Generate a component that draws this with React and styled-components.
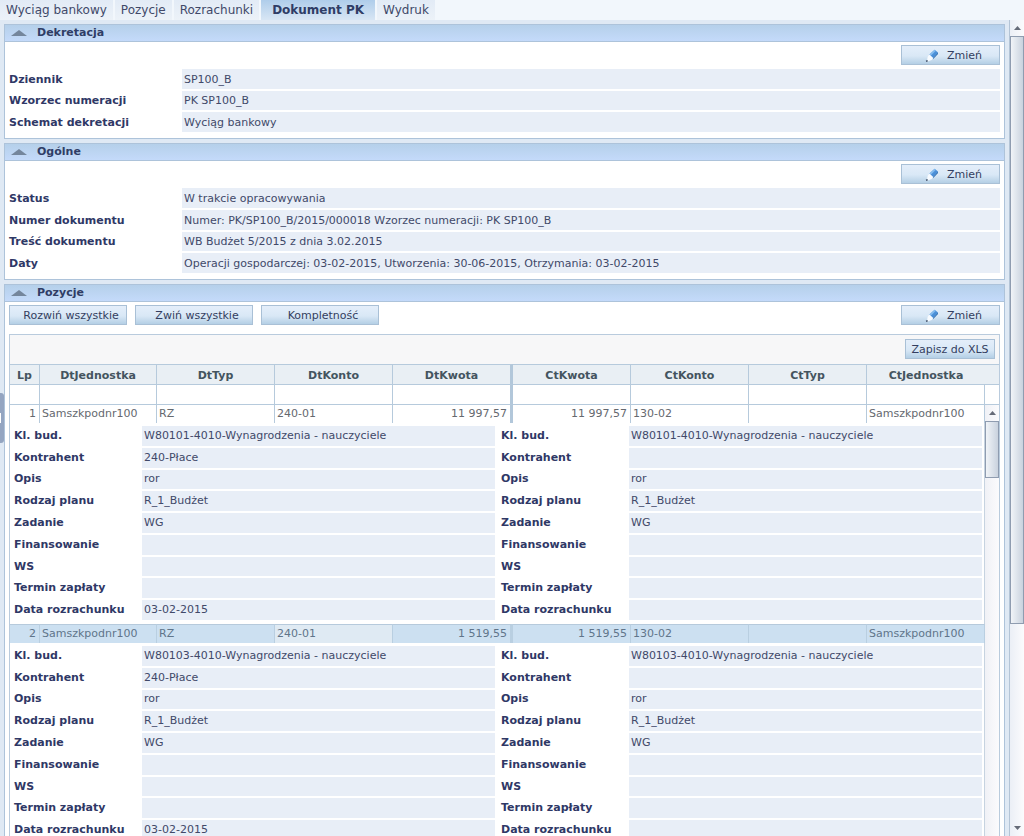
import React from "react";
import styled, { createGlobalStyle, css } from "styled-components";

const GlobalStyle = createGlobalStyle`
  *, *::before, *::after { box-sizing: border-box; }
  body {
    margin: 0;
    overflow: hidden;
    font: 11px/14px "DejaVu Sans", Verdana, sans-serif;
    color: #414969;
    background: #dfe9f4;
  }
  button, input { font: inherit; color: inherit; }
`;

const Shell = styled.div`
  height: 100vh;
  display: flex;
  flex-direction: column;
  overflow: hidden;
`;

const Tabs = styled.nav`
  flex: none;
  display: flex;
  gap: 2px;
  height: 20px;
  background: #f2f7fc;
  font-size: 12px;
  line-height: 20px;
`;

const Tab = styled.a`
  padding: 0 6px;
  color: #414969;
  text-decoration: none;
  white-space: nowrap;
  background: linear-gradient(#e2ebf6, #ecf2f8);
  ${(p) =>
    p.$active &&
    css`
      padding: 0 11px;
      font-weight: bold;
      color: #2f3d66;
      background: linear-gradient(#afcdea, #d8e6f4);
    `}
`;

const Workspace = styled.div`
  flex: 1;
  min-height: 0;
  display: flex;
  position: relative;
`;

const Handle = styled.button`
  position: absolute;
  left: 0;
  top: 373px;
  display: flex;
  align-items: center;
  width: 4px;
  height: 50px;
  padding: 0;
  border: 0;
  border-radius: 0 3px 3px 0;
  background: #94a5c1;

  &::before {
    content: "";
    width: 1px;
    height: 10px;
    background: #fff;
  }
`;

const Main = styled.main`
  flex: 1;
  min-width: 0;
  overflow: hidden;
  display: flex;
  flex-direction: column;
  gap: 4px;
  padding: 4px 4px 0;
`;

const PanelBox = styled.section`
  flex: none;
  border: 1px solid #adc3da;
  background: #fff;
`;

const PanelHeader = styled.h2`
  display: flex;
  align-items: center;
  gap: 9px;
  height: 17px;
  margin: 0;
  padding: 0 5px;
  font-size: 11px;
  line-height: 16px;
  color: #2f3d66;
  background: linear-gradient(#b5d0ea, #c4dafa);
  border-bottom: 1px solid #adc3da;
`;

const Toggle = styled.button`
  display: flex;
  padding: 0;
  border: 0;
  background: none;
`;

const PanelBody = styled.div`
  padding: 3px 4px 5px;
`;

const Toolbar = styled.div`
  display: flex;
  gap: 8px;
  margin-bottom: ${(p) => p.$space || 3}px;
`;

const buttonFace = css`
  height: 20px;
  border: 1px solid #a9c0d6;
  line-height: 16px;
  color: #333e60;
  background: linear-gradient(#e4eefa, #d9e8f6 55%, #b4cfe5);
`;

const ActionButton = styled.button`
  ${buttonFace}
  width: 118px;
  padding: 2px 0 0 6px;
`;

const EditButton = styled.button`
  ${buttonFace}
  display: flex;
  align-items: center;
  justify-content: center;
  gap: 8px;
  width: 99px;
  margin-left: auto;
  padding: 2px 0 0 6px;
`;

const ExportButton = styled.button`
  ${buttonFace}
  width: 90px;
  padding: 1px 0 0;
  white-space: nowrap;
`;

const Fields = styled.dl`
  flex: 1;
  display: grid;
  grid-auto-rows: 1fr;
  min-height: ${(p) => p.$height}px;
  margin: 0;
`;

const Field = styled.div`
  display: grid;
  grid-template-columns: ${(p) => (p.$compact ? 128 : 173)}px 1fr;
  align-items: stretch;
  padding: 1px 0;

  dt, dd {
    display: flex;
    align-items: center;
    padding-top: ${(p) => (p.$compact ? 0 : 2)}px;
  }
`;

const Term = styled.dt`
  font-weight: bold;
  color: #2f3866;
`;

const Value = styled.dd`
  margin: 0;
  padding: 0 2px;
  background: #e8eef7;
`;

const GridBox = styled.div`
  border: 1px solid #b9cbdd;
`;

const GridToolbar = styled.div`
  display: flex;
  justify-content: flex-end;
  padding: 4px 4px 5px;
  background: #f7f7f8;
`;

const Table = styled.table`
  width: 100%;
  table-layout: fixed;
  border-spacing: 0;
`;

const Col = styled.col`
  width: ${(p) => p.$width}px;
`;

const divider = css`
  border-right: ${(p) => (p.$middle ? "3px solid #b2c7da" : "1px solid #b6cadc")};
`;

const HeadCell = styled.th`
  height: 20px;
  padding: 2px 0 0;
  border-top: 1px solid #b6cadc;
  color: #44545f;
  background: #e9eff4;
  ${(p) => !p.$last && divider}
`;

const FilterCell = styled.td`
  height: 20px;
  padding: 0;
  border-top: 1px solid #b6cadc;
  ${(p) => !p.$last && divider}
`;

const FilterInput = styled.input`
  display: block;
  width: 100%;
  height: 19px;
  padding: 0 2px;
  border: 0;
  background: transparent;
`;

const Row = styled.tr`
  background: ${(p) => (p.$selected ? "#cce0f1" : "#fff")};
`;

const Cell = styled.td`
  height: 19px;
  padding: 0 3px 0 2px;
  line-height: 16px;
  color: #65696f;
  text-align: ${(p) => (p.$right ? "right" : "left")};
  border-top: 1px solid #b6cadc;
  ${divider}
  ${(p) =>
    p.$selected &&
    css`
      color: #60758a;
      border-right-color: #b9cfe1;
    `}
  ${(p) =>
    p.$focused &&
    css`
      background: #dfeaf3;
    `}
`;

const DetailCell = styled.td`
  padding: 2px 2px 3px 4px;
  border-right: 1px solid #c6d3e0;
`;

const Details = styled.div`
  display: flex;
  gap: 6px;
`;

const ScrollCell = styled.td`
  padding: 0;
  vertical-align: top;
  border-top: 1px solid #b6cadc;
  background: linear-gradient(90deg, #f0f1f6, #fbfbfd);
`;

const ScrollArrow = styled.button`
  display: flex;
  align-items: center;
  justify-content: center;
  width: 100%;
  height: 16px;
  flex: none;
  padding: 0;
  border: 0;
  background: transparent;
`;

const Thumb = styled.div`
  height: ${(p) => p.$size};
  border: 1px solid #8f9cb0;
  background: linear-gradient(90deg, #f1f4f8, #c9d2de);
`;

const PageScroll = styled.div`
  flex: none;
  display: flex;
  flex-direction: column;
  width: 15px;
  border-left: 1px solid #b3c4d6;
  background: linear-gradient(90deg, #ebeff6, #fbfbfd);
`;

const Spacer = styled.div`
  flex: 1;
`;

function Arrow({ down }) {
  return (
    <svg width="7" height="4" viewBox="0 0 7 4" aria-hidden="true">
      <path d={down ? "M0 0h7L3.5 4z" : "M0 4h7L3.5 0z"} fill="#666b78" />
    </svg>
  );
}

function Pencil() {
  return (
    <svg width="14" height="14" viewBox="0 0 14 14" aria-hidden="true">
      <path d="M4.4 5.5L9.6.8 13 3.4 8 9z" fill="#4a8fd8" />
      <path d="M4.4 5.5L9.6.8l1.4 1-5.2 5z" fill="#83bbee" />
      <path d="M8 9l5-5.6v1.6L8.2 10z" fill="#2567ae" />
      <path d="M4.4 5.5L8 9 6.6 11 2 12.8 2.6 8z" fill="#f8fbff" />
      <path d="M.8 11.6l1.7-.6.4 1.5-1.7.5z" fill="#46566e" />
    </svg>
  );
}

function Edit() {
  return (
    <EditButton type="button">
      <Pencil />
      Zmień
    </EditButton>
  );
}

function Panel({ title, children }) {
  return (
    <PanelBox>
      <PanelHeader>
        <Toggle type="button" aria-label={`Zwiń: ${title}`}>
          <svg width="18" height="6" viewBox="0 0 18 6" aria-hidden="true">
            <path d="M1 6h16L9 0z" fill="#74869c" />
          </svg>
        </Toggle>
        {title}
      </PanelHeader>
      <PanelBody>{children}</PanelBody>
    </PanelBox>
  );
}

function FieldList({ items, compact, height }) {
  return (
    <Fields $height={height}>
      {items.map(([label, value]) => (
        <Field key={label} $compact={compact}>
          <Term>{label}</Term>
          <Value>{value}</Value>
        </Field>
      ))}
    </Fields>
  );
}

const tabs = ["Wyciąg bankowy", "Pozycje", "Rozrachunki", "Dokument PK", "Wydruk"];

const posting = [
  ["Dziennik", "SP100_B"],
  ["Wzorzec numeracji", "PK SP100_B"],
  ["Schemat dekretacji", "Wyciąg bankowy"],
];

const general = [
  ["Status", "W trakcie opracowywania"],
  ["Numer dokumentu", "Numer: PK/SP100_B/2015/000018 Wzorzec numeracji: PK SP100_B"],
  ["Treść dokumentu", "WB Budżet 5/2015 z dnia 3.02.2015"],
  ["Daty", "Operacji gospodarczej: 03-02-2015, Utworzenia: 30-06-2015, Otrzymania: 03-02-2015"],
];

const columns = [
  "Lp", "DtJednostka", "DtTyp", "DtKonto", "DtKwota",
  "CtKwota", "CtKonto", "CtTyp", "CtJednostka",
];
const MIDDLE = 4;

const entries = [
  { amount: "11 997,57", budget: "W80101-4010-Wynagrodzenia - nauczyciele" },
  { amount: "1 519,55", budget: "W80103-4010-Wynagrodzenia - nauczyciele", selected: true },
];

const detailItems = (budget, contractor, date) => [
  ["Kl. bud.", budget],
  ["Kontrahent", contractor],
  ["Opis", "ror"],
  ["Rodzaj planu", "R_1_Budżet"],
  ["Zadanie", "WG"],
  ["Finansowanie", ""],
  ["WS", ""],
  ["Termin zapłaty", ""],
  ["Data rozrachunku", date],
];

function Entry({ entry, index }) {
  const { amount, budget, selected } = entry;
  const cells = [
    index + 1, "Samszkpodnr100", "RZ", "240-01", amount,
    amount, "130-02", "", "Samszkpodnr100",
  ];
  return (
    <>
      <Row $selected={selected}>
        {cells.map((text, i) => (
          <Cell
            key={i}
            $right={i === 0 || i === 4 || i === 5}
            $middle={i === MIDDLE}
            $selected={selected}
            $focused={selected && i === 3}
          >
            {text}
          </Cell>
        ))}
        {index === 0 && (
          <ScrollCell rowSpan={entries.length * 2}>
            <ScrollArrow type="button" aria-label="Przewiń w górę">
              <Arrow />
            </ScrollArrow>
            <Thumb $size="57px" />
          </ScrollCell>
        )}
      </Row>
      <tr>
        <DetailCell colSpan={columns.length}>
          <Details>
            <FieldList
              compact
              items={detailItems(budget, "240-Płace", "03-02-2015")}
              height={196}
            />
            <FieldList compact items={detailItems(budget, "", "")} height={196} />
          </Details>
        </DetailCell>
      </tr>
    </>
  );
}

export default function App() {
  return (
    <Shell>
      <GlobalStyle />
      <Tabs>
        {tabs.map((tab) => (
          <Tab key={tab} href="#" $active={tab === "Dokument PK"}>
            {tab}
          </Tab>
        ))}
      </Tabs>
      <Workspace>
        <Main>
          <Panel title="Dekretacja">
            <Toolbar>
              <Edit />
            </Toolbar>
            <FieldList items={posting} height={65} />
          </Panel>
          <Panel title="Ogólne">
            <Toolbar>
              <Edit />
            </Toolbar>
            <FieldList items={general} height={87} />
          </Panel>
          <Panel title="Pozycje">
            <Toolbar $space={9}>
              <ActionButton type="button">Rozwiń wszystkie</ActionButton>
              <ActionButton type="button">Zwiń wszystkie</ActionButton>
              <ActionButton type="button">Kompletność</ActionButton>
              <Edit />
            </Toolbar>
            <GridBox>
              <GridToolbar>
                <ExportButton type="button">Zapisz do XLS</ExportButton>
              </GridToolbar>
              <Table>
                <colgroup>
                  <Col $width={30} />
                  <Col $width={117} />
                  <col />
                  <col />
                  <Col $width={120} />
                  <col />
                  <col />
                  <col />
                  <col />
                  <Col $width={14} />
                </colgroup>
                <thead>
                  <tr>
                    {columns.map((name, i) => (
                      <HeadCell
                        key={name}
                        scope="col"
                        $middle={i === MIDDLE}
                        $last={i === columns.length - 1}
                      >
                        {name}
                      </HeadCell>
                    ))}
                    <HeadCell as="td" $last />
                  </tr>
                  <tr>
                    {columns.map((name, i) => (
                      <FilterCell key={name} $middle={i === MIDDLE}>
                        <FilterInput type="text" aria-label={`Filtr ${name}`} />
                      </FilterCell>
                    ))}
                    <FilterCell $last />
                  </tr>
                </thead>
                <tbody>
                  {entries.map((entry, i) => (
                    <Entry key={i} entry={entry} index={i} />
                  ))}
                </tbody>
              </Table>
            </GridBox>
          </Panel>
        </Main>
        <PageScroll>
          <ScrollArrow type="button" aria-label="Przewiń stronę w górę">
            <Arrow />
          </ScrollArrow>
          <Thumb $size="72%" />
          <Spacer />
          <ScrollArrow type="button" aria-label="Przewiń stronę w dół">
            <Arrow down />
          </ScrollArrow>
        </PageScroll>
        <Handle type="button" aria-label="Pokaż panel boczny" />
      </Workspace>
    </Shell>
  );
}
